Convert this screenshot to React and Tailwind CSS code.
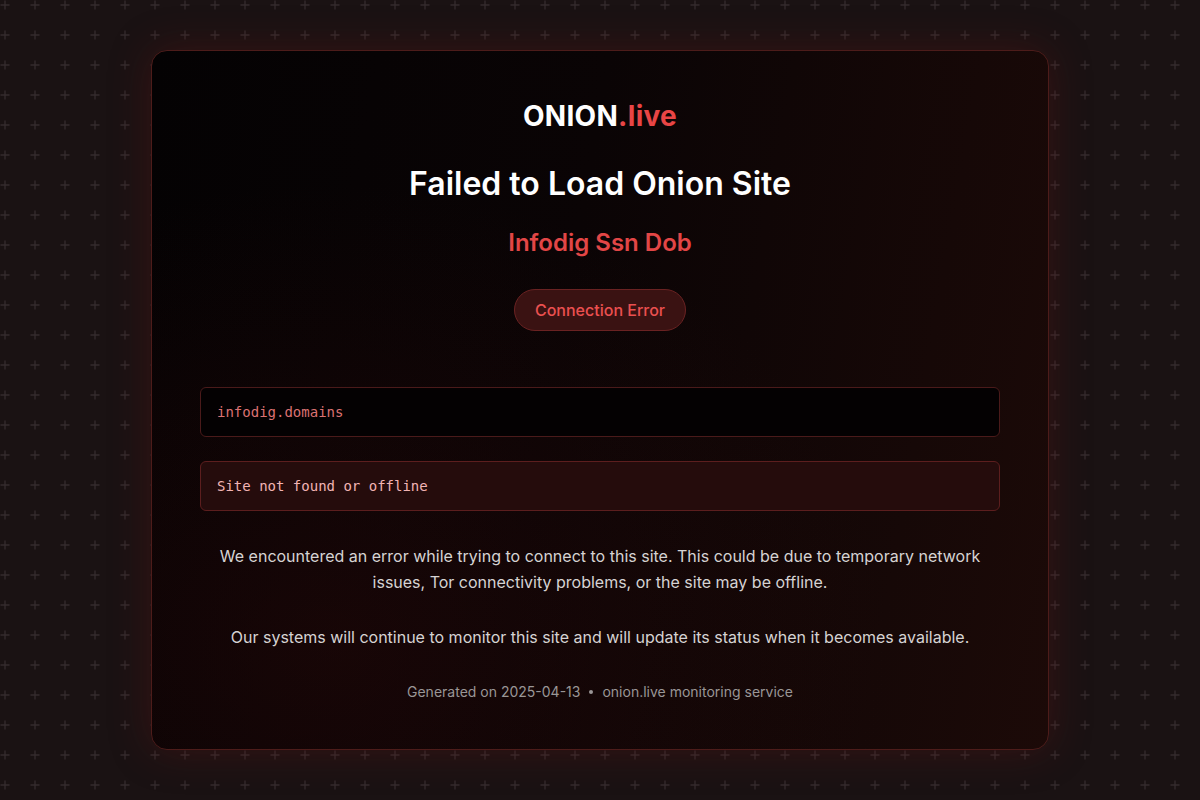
import React from "react";

function PlusPattern() {
  return (
    <svg className="absolute inset-0 h-full w-full" aria-hidden="true">
      <defs>
        <pattern id="plus" width="30" height="30" patternUnits="userSpaceOnUse" x="-10" y="-10">
          <path d="M15 10.5v9M10.5 15h9" stroke="#342a2c" strokeWidth="1.3" fill="none" />
        </pattern>
      </defs>
      <rect width="100%" height="100%" fill="url(#plus)" />
    </svg>
  );
}

export default function App() {
  return (
    <div
      className="relative min-h-[800px] w-full overflow-hidden bg-[#1a1213]"
      style={{ fontFamily: "Inter, 'Noto Sans', sans-serif" }}
    >
      <PlusPattern />
      <div className="relative flex justify-center pt-[50px]">
        <div className="w-[898px] h-[700px] rounded-[16px] border border-[#4d1c1a] bg-[linear-gradient(100deg,#040203_0%,#0a0405_45%,#1c0a08_100%)] shadow-[0_0_40px_rgba(110,20,20,0.35)] overflow-hidden">
          <div className="h-full w-full bg-[radial-gradient(ellipse_at_20%_85%,rgba(60,12,12,0.3),transparent_55%)] px-[48px] pt-[47px] flex flex-col items-center">
            <div className="text-[28px] leading-9 font-bold tracking-[0.3px] text-white">
              ONION<span className="text-[#e84545]">.live</span>
            </div>
            <h1 className="mt-[30px] text-[32px] leading-10 font-semibold text-white">
              Failed to Load Onion Site
            </h1>
            <h2 className="mt-[24px] text-[24px] leading-[30px] font-semibold text-[#e24646]">
              Infodig Ssn Dob
            </h2>
            <div className="mt-[31px] h-[42px] px-[20px] flex items-center rounded-full border border-[#6a2222] bg-[#3a1212] text-[16px] font-medium text-[#ea5050]">
              Connection Error
            </div>
            <div
              className="mt-[56px] w-full h-[50px] flex items-center px-[16px] rounded-[6px] border border-[#4a1a1a] bg-[#040102] text-[14px] text-[#dc7272]"
              style={{ fontFamily: "'DejaVu Sans Mono', monospace" }}
            >
              infodig.domains
            </div>
            <div
              className="mt-[24px] w-full h-[50px] flex items-center px-[16px] rounded-[6px] border border-[#5c1e1e] bg-[#250c0c] text-[14px] text-[#f2b4b4]"
              style={{ fontFamily: "'DejaVu Sans Mono', monospace" }}
            >
              Site not found or offline
            </div>
            <p className="mt-[32px] text-center text-[16px] leading-[26px] text-[#d6d3d3]">
              We encountered an error while trying to connect to this site. This could be due to temporary network
              <br />
              issues, Tor connectivity problems, or the site may be offline.
            </p>
            <p className="mt-[29px] text-center text-[16px] leading-[26px] text-[#d6d3d3]">
              Our systems will continue to monitor this site and will update its status when it becomes available.
            </p>
            <div className="mt-[32px] text-[14px] leading-5 text-[#9a9696] flex items-center">
              <span>Generated on 2025-04-13</span>
              <span className="mx-[9px] inline-block h-[4px] w-[4px] rounded-full bg-[#9a9696]" />
              <span>onion.live monitoring service</span>
            </div>
          </div>
        </div>
      </div>
    </div>
  );
}
